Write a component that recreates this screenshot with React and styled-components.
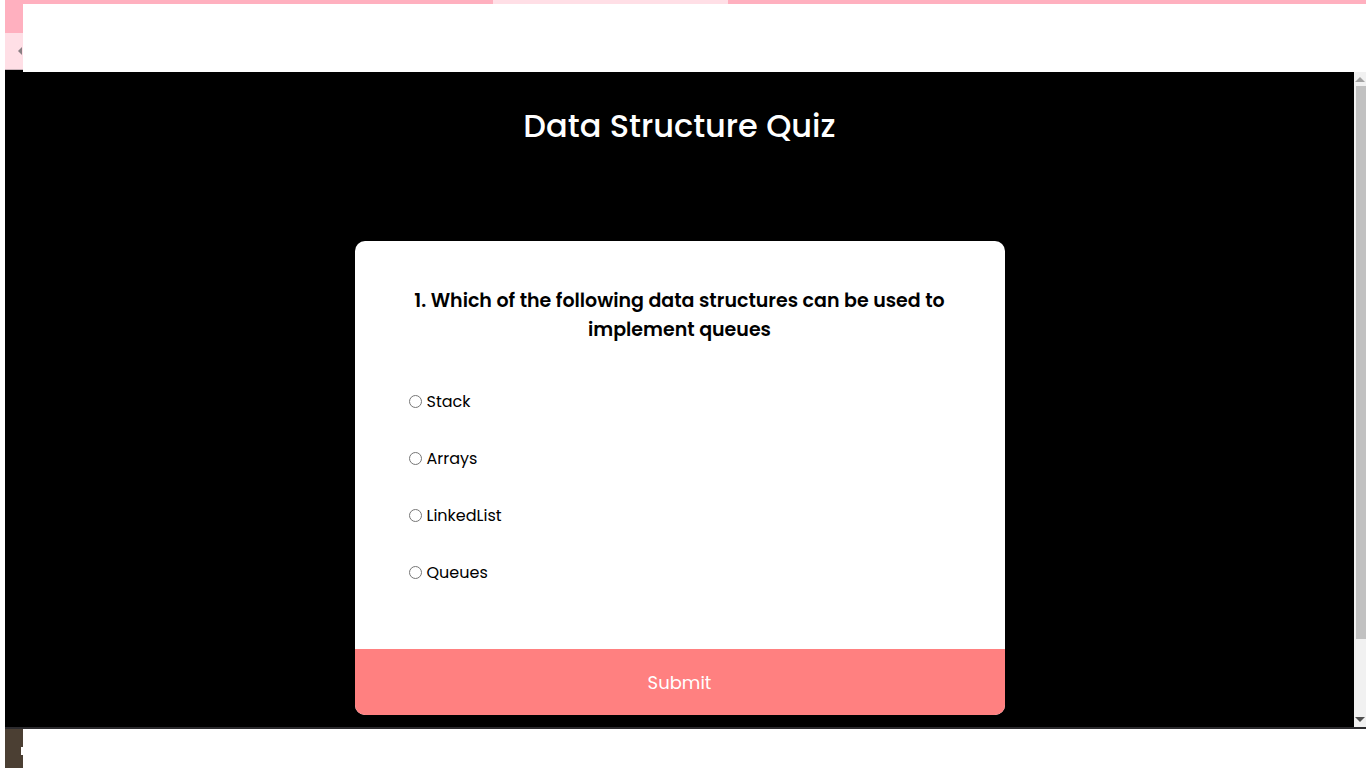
import React, {useState} from 'react'
import styled, {createGlobalStyle} from "styled-components"

const GlobalStyle = createGlobalStyle`
    html, body {
        margin: 0;
        padding: 0;
        background: #ffffff;
        overflow: hidden;
    }
    * {
        box-sizing: border-box;
    }
`

const options = ['Stack', 'Arrays', 'LinkedList', 'Queues']

function App() {
const [answer, setAnswer] = useState(null);

    return (
        <>
        <GlobalStyle />
        <Page>
            <Chrome>
                <SideTabs>
                    <TabTop />
                    <TabBack><BackArrow /></TabBack>
                    <TabRule />
                    <TabFoot />
                </SideTabs>
                <HeaderCol>
                    <TabStrip>
                        <StripPart width="470px" />
                        <StripPart width="235px" light />
                        <StripPart grow />
                    </TabStrip>
                    <HeaderBlank />
                </HeaderCol>
            </Chrome>
            <Viewport>
                <Main>
                    <Title>Data Structure Quiz</Title>
                    <Card>
                        <Question>1. Which of the following data structures can be used to implement queues</Question>
                        <OptionList>
                            {options.map(opt => (
                                <Option key={opt}>
                                    <Radio
                                        type="radio"
                                        name="answer"
                                        checked={answer === opt}
                                        onChange={() => setAnswer(opt)}
                                    />
                                    <span>{opt}</span>
                                </Option>
                            ))}
                        </OptionList>
                        <SubmitButton>Submit</SubmitButton>
                    </Card>
                </Main>
                <Scrollbar>
                    <ArrowUp />
                    <Thumb />
                    <ArrowDown />
                </Scrollbar>
            </Viewport>
            <Footer>
                <FooterRule />
                <FooterRow>
                    <FooterTab><FooterMark /></FooterTab>
                    <FooterBlank />
                </FooterRow>
            </Footer>
        </Page>
        </>
    )
}

export default App

const Page = styled.div`
    height: 768px;
    padding-left: 5px;
    display: flex;
    flex-direction: column;
    background: #ffffff;
    font-family: "Poppins", "Open Sans", sans-serif;
`
const Chrome = styled.div`
    height: 72px;
    display: flex;
`
const SideTabs = styled.div`
    width: 18px;
    display: flex;
    flex-direction: column;
`
const TabTop = styled.div`
    height: 33px;
    background: #ffb0bf;
`
const TabBack = styled.div`
    height: 36px;
    background: #ffdfe6;
    display: flex;
    align-items: center;
    justify-content: flex-end;
`
const BackArrow = styled.div`
    width: 0;
    height: 0;
    border-top: 4px solid transparent;
    border-bottom: 4px solid transparent;
    border-right: 4px solid #8a7f83;
    margin-right: 1px;
`
const TabRule = styled.div`
    height: 1px;
    background: #c9b3ba;
`
const TabFoot = styled.div`
    flex: 1;
    background: #000;
`
const HeaderCol = styled.div`
    flex: 1;
    display: flex;
    flex-direction: column;
`
const TabStrip = styled.div`
    height: 4px;
    display: flex;
`
const StripPart = styled.div`
    width: ${props => props.width || 'auto'};
    flex: ${props => props.grow ? 1 : 'none'};
    background: ${props => props.light ? '#ffdfe6' : '#ffb0bf'};
`
const HeaderBlank = styled.div`
    flex: 1;
    background: #ffffff;
`
const Viewport = styled.div`
    height: 655px;
    display: flex;
    background: #000000;
`
const Main = styled.div`
    flex: 1;
    display: flex;
    flex-direction: column;
    align-items: center;
`
const Title = styled.h1`
    margin: 30px 0 0;
    font-size: 32px;
    line-height: 48px;
    font-weight: 500;
    color: #ffffff;
`
const Card = styled.div`
    margin-top: 91px;
    width: 650px;
    background: #ffffff;
    border-radius: 10px;
    overflow: hidden;
    display: flex;
    flex-direction: column;
`
const Question = styled.h2`
    margin: 45px 0 0;
    padding: 0 56px;
    text-align: center;
    font-size: 19px;
    line-height: 29px;
    font-weight: 600;
    color: #000000;
`
const OptionList = styled.ul`
    list-style: none;
    margin: 0;
    padding: 29px 0 48px 54px;
`
const Option = styled.li`
    height: 57px;
    display: flex;
    align-items: center;
    gap: 5px;
    font-size: 16px;
    color: #000000;
`
const Radio = styled.input`
    margin: 0;
    width: 13px;
    height: 13px;
`
const SubmitButton = styled.button`
    height: 66px;
    flex: none;
    border: none;
    background: #ff8080;
    color: #ffffff;
    font-family: inherit;
    font-size: 18px;
    cursor: pointer;
`
const Scrollbar = styled.div`
    width: 12px;
    background: #f1f1f1;
    display: flex;
    flex-direction: column;
    align-items: flex-end;
`
const ArrowUp = styled.div`
    margin: 5px 0 4px;
    width: 0;
    height: 0;
    border-left: 5px solid transparent;
    border-right: 5px solid transparent;
    border-bottom: 5px solid #a3a3a3;
    align-self: center;
`
const Thumb = styled.div`
    width: 10px;
    height: 553px;
    background: #c1c1c1;
`
const ArrowDown = styled.div`
    margin-top: auto;
    margin-bottom: 5px;
    width: 0;
    height: 0;
    border-left: 5px solid transparent;
    border-right: 5px solid transparent;
    border-top: 5px solid #505050;
    align-self: center;
`
const Footer = styled.div`
    flex: 1;
    display: flex;
    flex-direction: column;
`
const FooterRule = styled.div`
    height: 2px;
    background: #2c2b2e;
`
const FooterRow = styled.div`
    flex: 1;
    display: flex;
`
const FooterTab = styled.div`
    width: 18px;
    background: #4b3f33;
    display: flex;
    align-items: center;
    padding-top: 4px;
`
const FooterMark = styled.div`
    width: 3px;
    height: 8px;
    margin-left: 16px;
    background: #ffffff;
`
const FooterBlank = styled.div`
    flex: 1;
    background: #ffffff;
`
